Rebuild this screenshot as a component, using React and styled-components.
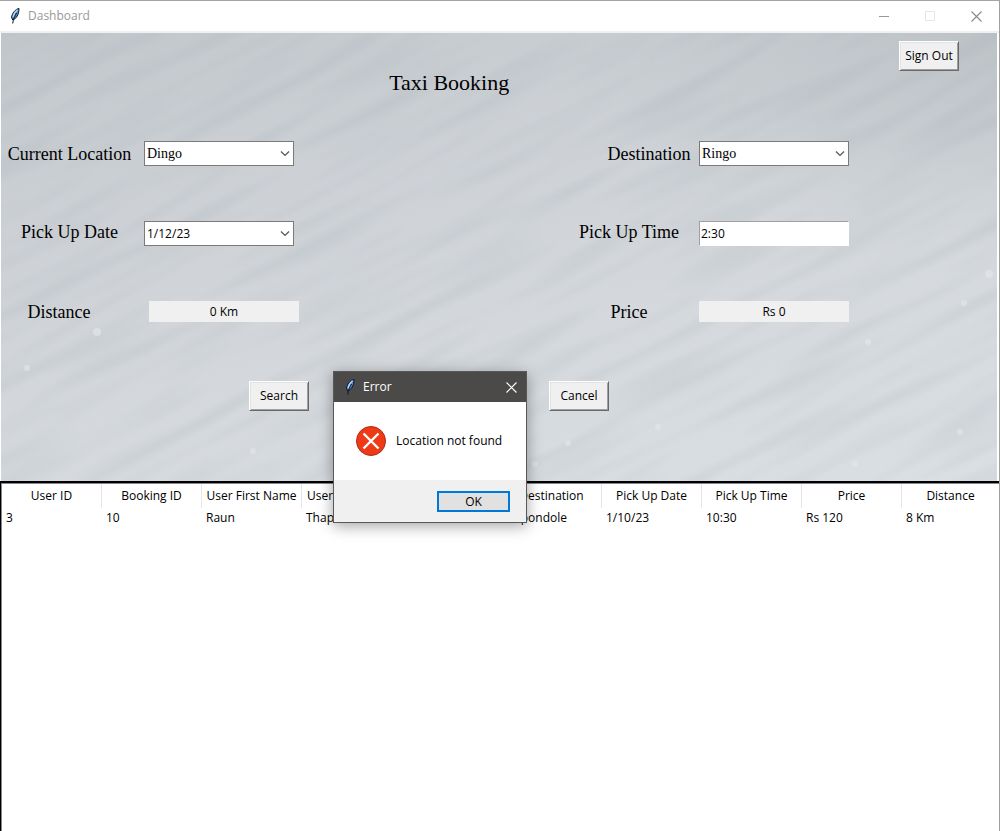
import React, { useState } from "react";
import styled, { createGlobalStyle } from "styled-components";

const GlobalStyle = createGlobalStyle`
  * { box-sizing: border-box; }
  body {
    margin: 0;
    background: #fff;
    color: #000;
    font: 12px/16px "Open Sans", "Noto Sans", sans-serif;
  }
`;

const serif = `"Liberation Serif", "Times New Roman", serif`;

const Window = styled.div`
  position: relative;
  display: flex;
  flex-direction: column;
  min-height: 100vh;
  border-top: 1px solid #a5a5a5;
  border-right: 1px solid #a0a0a0;
`;

const TitleBar = styled.header`
  display: flex;
  align-items: center;
  height: 32px;
  padding-left: 8px;
  border-bottom: 2px solid #f0f0f0;
  color: #999;
`;

const WindowTitle = styled.span`
  flex: 1;
  padding-left: 6px;
`;

const CaptionButton = styled.button`
  display: grid;
  place-items: center;
  width: 46px;
  height: 30px;
  padding: 0;
  border: 0;
  background: none;
  color: ${(p) => p.$color};
`;

const BookingPanel = styled.main`
  position: relative;
  height: 448px;
  margin: 0 2px 0 1px;
  overflow: hidden;
  background:
    radial-gradient(ellipse at 100% 0, #bcc3c7 0, transparent 32%),
    linear-gradient(168deg, #c1c7cb 0, #cdd1d6 32%, #d4d8dc 60%, #dadfe3 100%);
`;

const Sand = styled.svg`
  position: absolute;
  inset: 0;
  width: 100%;
  height: 100%;
`;

const Content = styled.div`
  position: relative;
`;

const TopRow = styled.div`
  display: flex;
  justify-content: flex-end;
  padding: 8px 38px 0 0;
`;

const Heading = styled.h1`
  width: 90%;
  margin: 0 0 44px;
  font: 22px/24px ${serif};
  padding-bottom: 2px;
  text-align: center;
`;

const RaisedButton = styled.button`
  width: 60px;
  height: 30px;
  padding: 0;
  border: 1px solid;
  border-color: #fff #696969 #696969 #fff;
  box-shadow: inset 1px 1px #e3e3e3, inset -1px -1px #a0a0a0;
  background: #f0f0f0;
  color: #000;
  font: inherit;
`;

const FormRow = styled.div`
  display: flex;
  justify-content: space-between;
  height: 80px;
  padding-right: 148px;
`;

const Field = styled.div`
  display: flex;
  align-items: flex-start;
  gap: ${(p) => p.$gap}px;
`;

const Label = styled.label`
  width: ${(p) => p.$width}px;
  padding-top: ${(p) => (p.$high ? 0 : 2)}px;
  font: 18px/22px ${serif};
  text-align: center;
  white-space: nowrap;
`;

const ComboBox = styled.span`
  position: relative;
  width: 150px;
  height: 25px;

  svg {
    position: absolute;
    top: 9px;
    right: 4px;
    pointer-events: none;
  }
`;

const Select = styled.select`
  appearance: none;
  width: 100%;
  height: 100%;
  padding: 0 20px 0 2px;
  border: 1px solid #7a7a7a;
  border-radius: 0;
  background: #fff;
  color: #000;
  font: ${(p) => (p.$serif ? `14px ${serif}` : "inherit")};
`;

const TextBox = styled.input`
  width: 150px;
  height: 25px;
  padding: 0 1px;
  border: 1px solid;
  border-color: #a0a0a0 #fff #fff #a0a0a0;
  background: #fff;
  color: #000;
  font: inherit;
`;

const Result = styled.output`
  width: 150px;
  height: 21px;
  background: #f0f0f0;
  line-height: 21px;
  text-align: center;
`;

const Actions = styled.div`
  display: flex;
  gap: 240px;
  padding-left: 248px;
`;

const Bookings = styled.section`
  flex: 1;
  padding: 1px 0 0 1px;
  border-top: 2px solid #000;
  border-left: 1px solid #000;
  box-shadow: inset 1px 1px #828790;
  background: #fff;
`;

const Table = styled.table`
  width: 100%;
  border-spacing: 0;
  table-layout: fixed;
`;

const HeadCell = styled.th`
  width: 100px;
  height: 24px;
  padding: 0;
  border-right: 1px solid #e5e5e5;
  font-weight: 400;
  white-space: nowrap;

  &:last-child {
    width: auto;
    border-right: 0;
  }
`;

const Cell = styled.td`
  height: 20px;
  padding: 0 4px;
  white-space: nowrap;
`;

const Dialog = styled.div`
  position: absolute;
  top: 370px;
  left: 333px;
  width: 194px;
  border: 1px solid #5a5856;
  background: #fff;
  box-shadow: 0 3px 14px rgba(0, 0, 0, 0.36);
`;

const DialogTitle = styled.div`
  display: flex;
  align-items: center;
  height: 30px;
  padding-left: 9px;
  background: #4c4a48;
  color: #fff;

  ${CaptionButton} { width: 30px; }
`;

const DialogBody = styled.div`
  display: flex;
  align-items: center;
  gap: 10px;
  height: 78px;
  padding-left: 22px;
  white-space: nowrap;
`;

const DialogFooter = styled.div`
  display: flex;
  justify-content: flex-end;
  height: 42px;
  padding: 11px 16px 0 0;
  background: #f0f0f0;
`;

const OkButton = styled.button`
  width: 73px;
  height: 21px;
  padding: 0;
  border: 2px solid #0078d7;
  background: #e1e1e1;
  color: #000;
  font: inherit;
`;

const Feather = () => (
  <svg width="14" height="18" viewBox="0 0 14 18" aria-hidden="true">
    <path d="M11 1.500C7.500 2 4.200 6 3.500 10.500L4.800 13C8.500 11.500 11 7.500 11 1.500Z" fill="#4a8ad8" stroke="#10141c" />
    <path d="M9.500 2.800C7.500 4.500 5.500 7.500 5 10" fill="none" stroke="#b5dafa" strokeWidth="1.300" />
    <path d="M8.500 6C7 9 5.200 12 4.700 16.500" fill="none" stroke="#10141c" />
  </svg>
);

const Chevron = () => (
  <svg width="10" height="7" viewBox="0 0 10 7" aria-hidden="true">
    <path d="M1 1.500L5 5.500L9 1.500" fill="none" stroke="#555" strokeWidth="1.200" />
  </svg>
);

const Cross = () => (
  <svg width="11" height="11" viewBox="0 0 11 11" aria-hidden="true">
    <path d="M.5 .5L10.500 10.500M10.500 .5L.5 10.500" stroke="currentColor" strokeWidth="1.100" />
  </svg>
);

const ErrorMark = () => (
  <svg width="30" height="30" viewBox="0 0 30 30" role="img" aria-label="Error">
    <circle cx="15" cy="15" r="14.500" fill="#f03a17" stroke="#a92b17" />
    <path d="M7.500 7.500L22.500 22.500M22.500 7.500L7.500 22.500" stroke="#fff" strokeWidth="2.400" />
  </svg>
);

const SandTexture = () => (
  <Sand aria-hidden="true">
    <defs>
      <filter id="ripples" x="0" y="0" width="100%" height="100%" colorInterpolationFilters="sRGB">
        <feTurbulence type="fractalNoise" baseFrequency="0.008 0.065" numOctaves="1" seed="8" />
        <feColorMatrix values="0 0 0 0 .6  0 0 0 0 .64  0 0 0 0 .67  .45 0 0 0 -.19" />
      </filter>
    </defs>
    <g transform="rotate(-27)">
      <rect x="-400" y="-100" width="1500" height="1200" filter="url(#ripples)" />
    </g>
    <g fill="#e2e6e9" opacity=".7">
      <circle cx="96" cy="299" r="4" />
      <circle cx="26" cy="335" r="3" />
      <circle cx="567" cy="410" r="3" />
      <circle cx="534" cy="431" r="3" />
      <circle cx="796" cy="463" r="3" />
      <circle cx="988" cy="241" r="4" />
      <circle cx="867" cy="309" r="3" />
      <circle cx="959" cy="399" r="3" />
      <circle cx="657" cy="394" r="3" />
      <circle cx="854" cy="431" r="3" />
      <circle cx="252" cy="418" r="3" />
      <circle cx="963" cy="270" r="3" />
    </g>
  </Sand>
);

function Combo({ id, value, serif: isSerif }) {
  return (
    <ComboBox>
      <Select id={id} defaultValue={value} $serif={isSerif}>
        <option>{value}</option>
      </Select>
      <Chevron />
    </ComboBox>
  );
}

const columns = [
  "User ID", "Booking ID", "User First Name", "User Last Name", "",
  "Destination", "Pick Up Date", "Pick Up Time", "Price", "Distance",
];
const bookings = [["3", "10", "Raun", "Thapa", "", "Kupondole", "1/10/23", "10:30", "Rs 120", "8 Km"]];

export default function App() {
  const [error, setError] = useState(true);
  return (
    <>
      <GlobalStyle />
      <Window>
        <TitleBar>
          <Feather />
          <WindowTitle>Dashboard</WindowTitle>
          <CaptionButton $color="#999" aria-label="Minimize">
            <svg width="10" height="10"><path d="M0 5.500H10" stroke="currentColor" /></svg>
          </CaptionButton>
          <CaptionButton $color="#e5e5e5" aria-label="Maximize">
            <svg width="10" height="10"><path d="M.5 .5H9.500V9.500H.5Z" fill="none" stroke="currentColor" /></svg>
          </CaptionButton>
          <CaptionButton $color="#888" aria-label="Close"><Cross /></CaptionButton>
        </TitleBar>

        <BookingPanel>
          <SandTexture />
          <Content>
            <TopRow><RaisedButton>Sign Out</RaisedButton></TopRow>
            <Heading>Taxi Booking</Heading>
            <FormRow>
              <Field $gap={6}>
                <Label $width={137} htmlFor="from">Current Location</Label>
                <Combo id="from" value="Dingo" serif />
              </Field>
              <Field $gap={0}>
                <Label $width={100} htmlFor="to">Destination</Label>
                <Combo id="to" value="Ringo" serif />
              </Field>
            </FormRow>
            <FormRow>
              <Field $gap={6}>
                <Label $width={137} $high htmlFor="date">Pick Up Date</Label>
                <Combo id="date" value="1/12/23" />
              </Field>
              <Field $gap={0}>
                <Label $width={140} $high htmlFor="time">Pick Up Time</Label>
                <TextBox id="time" defaultValue="2:30" />
              </Field>
            </FormRow>
            <FormRow>
              <Field $gap={32}>
                <Label $width={116} $high htmlFor="distance">Distance</Label>
                <Result id="distance">0 Km</Result>
              </Field>
              <Field $gap={0}>
                <Label $width={140} $high htmlFor="price">Price</Label>
                <Result id="price">Rs 0</Result>
              </Field>
            </FormRow>
            <Actions>
              <RaisedButton onClick={() => setError(true)}>Search</RaisedButton>
              <RaisedButton>Cancel</RaisedButton>
            </Actions>
          </Content>
        </BookingPanel>

        <Bookings>
          <Table>
            <thead>
              <tr>{columns.map((c) => <HeadCell key={c}>{c}</HeadCell>)}</tr>
            </thead>
            <tbody>
              {bookings.map((row) => (
                <tr key={row[1]}>{row.map((v, i) => <Cell key={columns[i]}>{v}</Cell>)}</tr>
              ))}
            </tbody>
          </Table>
        </Bookings>

        {error && (
          <Dialog role="alertdialog" aria-label="Error">
            <DialogTitle>
              <Feather />
              <WindowTitle>Error</WindowTitle>
              <CaptionButton $color="#fff" aria-label="Close" onClick={() => setError(false)}><Cross /></CaptionButton>
            </DialogTitle>
            <DialogBody>
              <ErrorMark />
              <span>Location not found</span>
            </DialogBody>
            <DialogFooter>
              <OkButton onClick={() => setError(false)}>OK</OkButton>
            </DialogFooter>
          </Dialog>
        )}
      </Window>
    </>
  );
}
